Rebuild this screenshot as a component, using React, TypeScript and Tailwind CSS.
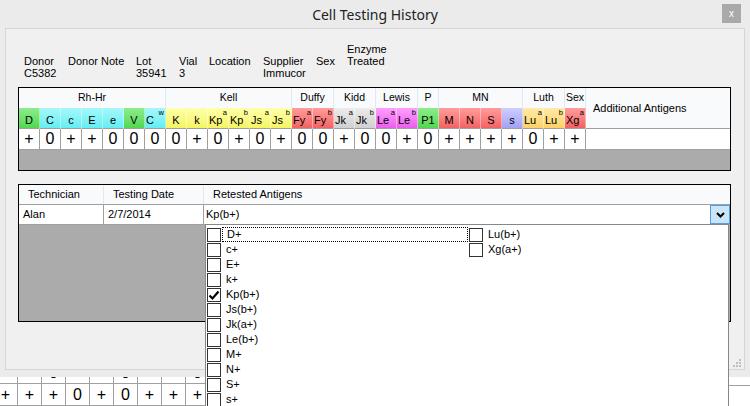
import React from 'react';

const TONES = {
  green: 'bg-linear-to-b from-[#8cec8c] to-[#50d850]',
  cyan: 'bg-linear-to-b from-[#a4f8fa] to-[#62eef3]',
  yellow: 'bg-linear-to-b from-[#ffffaa] to-[#f5f560]',
  red: 'bg-linear-to-b from-[#ff9c9c] to-[#f36262]',
  gray: 'bg-linear-to-b from-[#ececec] to-[#d0d0d0]',
  pink: 'bg-linear-to-b from-[#ff9eff] to-[#ec5cec]',
  blue: 'bg-linear-to-b from-[#cccfff] to-[#a2a2f6]',
  gold: 'bg-linear-to-b from-[#ffeaaa] to-[#fcd262]',
};

type Antigen = { name: string; sup?: string; value: string; tone: keyof typeof TONES };

const ANTIGENS: Antigen[] = [
  { name: 'D', value: '+', tone: 'green' },
  { name: 'C', value: '0', tone: 'cyan' },
  { name: 'c', value: '+', tone: 'cyan' },
  { name: 'E', value: '+', tone: 'cyan' },
  { name: 'e', value: '0', tone: 'cyan' },
  { name: 'V', value: '0', tone: 'green' },
  { name: 'C', sup: 'w', value: '0', tone: 'cyan' },
  { name: 'K', value: '0', tone: 'yellow' },
  { name: 'k', value: '+', tone: 'yellow' },
  { name: 'Kp', sup: 'a', value: '0', tone: 'yellow' },
  { name: 'Kp', sup: 'b', value: '+', tone: 'yellow' },
  { name: 'Js', sup: 'a', value: '0', tone: 'yellow' },
  { name: 'Js', sup: 'b', value: '+', tone: 'yellow' },
  { name: 'Fy', sup: 'a', value: '0', tone: 'red' },
  { name: 'Fy', sup: 'b', value: '0', tone: 'red' },
  { name: 'Jk', sup: 'a', value: '+', tone: 'gray' },
  { name: 'Jk', sup: 'b', value: '0', tone: 'gray' },
  { name: 'Le', sup: 'a', value: '0', tone: 'pink' },
  { name: 'Le', sup: 'b', value: '+', tone: 'pink' },
  { name: 'P1', value: '0', tone: 'green' },
  { name: 'M', value: '+', tone: 'red' },
  { name: 'N', value: '+', tone: 'red' },
  { name: 'S', value: '+', tone: 'red' },
  { name: 's', value: '+', tone: 'blue' },
  { name: 'Lu', sup: 'a', value: '0', tone: 'gold' },
  { name: 'Lu', sup: 'b', value: '+', tone: 'gold' },
  { name: 'Xg', sup: 'a', value: '+', tone: 'red' },
];

const GROUPS = [
  { label: 'Rh-Hr', w: 'w-[147px]' },
  { label: 'Kell', w: 'w-[126px]' },
  { label: 'Duffy', w: 'w-[42px]' },
  { label: 'Kidd', w: 'w-[42px]' },
  { label: 'Lewis', w: 'w-[42px]' },
  { label: 'P', w: 'w-[21px]' },
  { label: 'MN', w: 'w-[84px]' },
  { label: 'Luth', w: 'w-[42px]' },
  { label: 'Sex', w: 'w-[21px]' },
];

const FIELDS = [
  { label: 'Donor', value: 'C5382', w: 'w-[44px]' },
  { label: 'Donor Note', value: '', w: 'w-[68px]' },
  { label: 'Lot', value: '35941', w: 'w-[43px]' },
  { label: 'Vial', value: '3', w: 'w-[30px]' },
  { label: 'Location', value: '', w: 'w-[54px]' },
  { label: 'Supplier', value: 'Immucor', w: 'w-[53px]' },
  { label: 'Sex', value: '', w: 'w-[31px]' },
];

const LIST_LEFT = ['D+', 'c+', 'E+', 'k+', 'Kp(b+)', 'Js(b+)', 'Jk(a+)', 'Le(b+)', 'M+', 'N+', 'S+', 's+'];
const LIST_RIGHT = ['Lu(b+)', 'Xg(a+)'];

function CheckItem({ label, checked, focused }: { label: string; checked?: boolean; focused?: boolean }) {
  return (
    <div className="flex items-center h-[15px]">
      <div className="ml-[1px] w-[14px] h-[14px] border border-[#333] bg-white flex items-center justify-center">
        {checked && (
          <svg width="12" height="12" viewBox="0 0 12 12">
            <path d="M1.5 6.5 L4.5 9.5 L10.5 2.5" fill="none" stroke="#000" strokeWidth="2.2" />
          </svg>
        )}
      </div>
      <div
        className={`ml-[1px] h-[15px] flex items-center pl-[4px] ${focused ? 'w-[246px] border border-dotted border-black' : ''}`}
      >
        {label}
      </div>
    </div>
  );
}

function BgRow({ vals }: { vals: string[] }) {
  return (
    <div className="flex">
      {vals.map((v, i) => (
        <div key={i} className="w-[24px] h-[22px] shrink-0 border-r border-b border-[#a0a0a0] flex items-center justify-center text-[16px]">
          {v}
        </div>
      ))}
    </div>
  );
}

export default function App() {
  return (
    <div className="relative w-[750px] h-[406px] overflow-hidden bg-white text-black text-[11px] font-['Liberation_Sans',Arial,sans-serif]">
      {/* dialog window */}
      <div className="h-[377px] bg-[#ebebeb] flex flex-col">
        <div className="relative h-[28px] flex items-center justify-center">
          <span className="text-[14px] text-[#222] font-['Noto_Sans',sans-serif]">Cell Testing History</span>
          <div className="absolute right-[9px] top-[4px] w-[19px] h-[19px] bg-[#a9a9a9] text-white text-[10px] flex items-center justify-center">
            x
          </div>
        </div>

        <div className="relative mx-[5px] h-[342px] border border-[#d6d6d6] bg-[#f0f0f0] pl-[12px] pr-[13px] pt-[14px]">
          {/* donor info */}
          <div className="flex ml-[6px] leading-[12px]">
            {FIELDS.map((f) => (
              <div key={f.label} className={`${f.w} shrink-0 flex flex-col`}>
                <div className="h-[24px] flex items-end">{f.label}</div>
                <div className="h-[12px]">{f.value}</div>
              </div>
            ))}
            <div className="flex flex-col">
              <div className="h-[24px]">
                Enzyme
                <br />
                Treated
              </div>
            </div>
          </div>

          {/* antigen grid */}
          <div className="mt-[8px] border border-black bg-[#ababab]">
            <div className="flex bg-white">
              <div className="flex flex-col">
                <div className="flex h-[20px] bg-[#f9fafc]">
                  {GROUPS.map((g) => (
                    <div key={g.label} className={`${g.w} border-r border-[#e2e8ef] flex items-center justify-center text-[10.5px]`}>
                      {g.label}
                    </div>
                  ))}
                </div>
                <div className="flex">
                  {ANTIGENS.map((a, i) => (
                    <div
                      key={i}
                      className={`relative w-[21px] h-[21px] border-r border-b border-r-white/40 border-b-[#a0a0a0] ${TONES[a.tone]} flex items-center pt-[4px] text-[11px] leading-none ${a.sup ? 'justify-start pl-[1px]' : 'justify-center'}`}
                    >
                      <span>{a.name}</span>
                      {a.sup && <span className="absolute right-[1px] top-[1px] text-[7.5px] leading-none">{a.sup}</span>}
                    </div>
                  ))}
                </div>
              </div>
              <div className="flex-1 h-[41px] bg-[#f9fafc] border-b border-[#a0a0a0] flex items-center pl-[7px]">
                Additional Antigens
              </div>
            </div>
            <div className="flex h-[21px] bg-white">
              {ANTIGENS.map((a, i) => (
                <div key={i} className="w-[21px] h-[21px] border-r border-b border-[#a0a0a0] flex items-center justify-center text-[16px]">
                  {a.value}
                </div>
              ))}
              <div className="flex-1 border-b border-[#a0a0a0]" />
            </div>
            <div className="h-[20px]" />
          </div>

          {/* history grid */}
          <div className="mt-[13px] border border-black bg-[#ababab]">
            <div className="flex h-[20px] bg-[#f9fafc] border-b border-[#a0a0a0]">
              <div className="w-[85px] border-r border-[#e2e8ef] flex items-center pl-[9px]">Technician</div>
              <div className="w-[100px] border-r border-[#e2e8ef] flex items-center pl-[9px]">Testing Date</div>
              <div className="flex-1 flex items-center pl-[9px]">Retested Antigens</div>
            </div>
            <div className="flex h-[20px] bg-white border-b border-[#a0a0a0]">
              <div className="w-[85px] border-r border-[#a0a0a0] flex items-center pl-[4px]">Alan</div>
              <div className="w-[100px] border-r border-[#a0a0a0] flex items-center pl-[4px]">2/7/2014</div>
              <div className="flex-1 flex items-center pl-[2px]">
                <span className="flex-1">Kp(b+)</span>
                <div className="w-[20px] h-[19px] bg-[#cce4f7] border border-[#569de5] flex items-center justify-center">
                  <svg width="9" height="6" viewBox="0 0 9 6">
                    <path d="M1 1 L4.5 4.5 L8 1" fill="none" stroke="#000" strokeWidth="2" />
                  </svg>
                </div>
              </div>
            </div>
            <div className="h-[96px]" />
          </div>

          {/* size grip */}
          <svg className="absolute right-[3px] bottom-[2px]" width="9" height="9" viewBox="0 0 9 9">
            <rect x="7" y="1" width="2" height="2" fill="#bdbdbd" />
            <rect x="4" y="4" width="2" height="2" fill="#bdbdbd" />
            <rect x="7" y="4" width="2" height="2" fill="#bdbdbd" />
            <rect x="1" y="7" width="2" height="2" fill="#bdbdbd" />
            <rect x="4" y="7" width="2" height="2" fill="#bdbdbd" />
            <rect x="7" y="7" width="2" height="2" fill="#bdbdbd" />
          </svg>
        </div>
      </div>

      {/* grid of the main form behind the dialog */}
      <div className="h-[29px] flex bg-white">
        <div className="w-[205px] overflow-hidden">
          <div className="-ml-[6px] -mt-[15px]">
            <BgRow vals={['+', '+', '0', '+', '+', '0', '+', '+', '0']} />
            <BgRow vals={['+', '+', '+', '0', '+', '0', '+', '+', '+']} />
          </div>
        </div>
        <div className="flex-1" />
        <div className="w-[21px] mt-[8px] border-t border-[#a0a0a0]" />
      </div>

      {/* open checked list of the combo */}
      <div className="absolute left-[205px] top-[224px] w-[524px] h-[200px] bg-white border border-[#828790] pt-[2px] flex">
        <div className="w-[262px] flex flex-col">
          {LIST_LEFT.map((l, i) => (
            <CheckItem key={l} label={l} checked={l === 'Kp(b+)'} focused={i === 0} />
          ))}
        </div>
        <div className="flex flex-col">
          {LIST_RIGHT.map((l) => (
            <CheckItem key={l} label={l} />
          ))}
        </div>
      </div>
    </div>
  );
}
